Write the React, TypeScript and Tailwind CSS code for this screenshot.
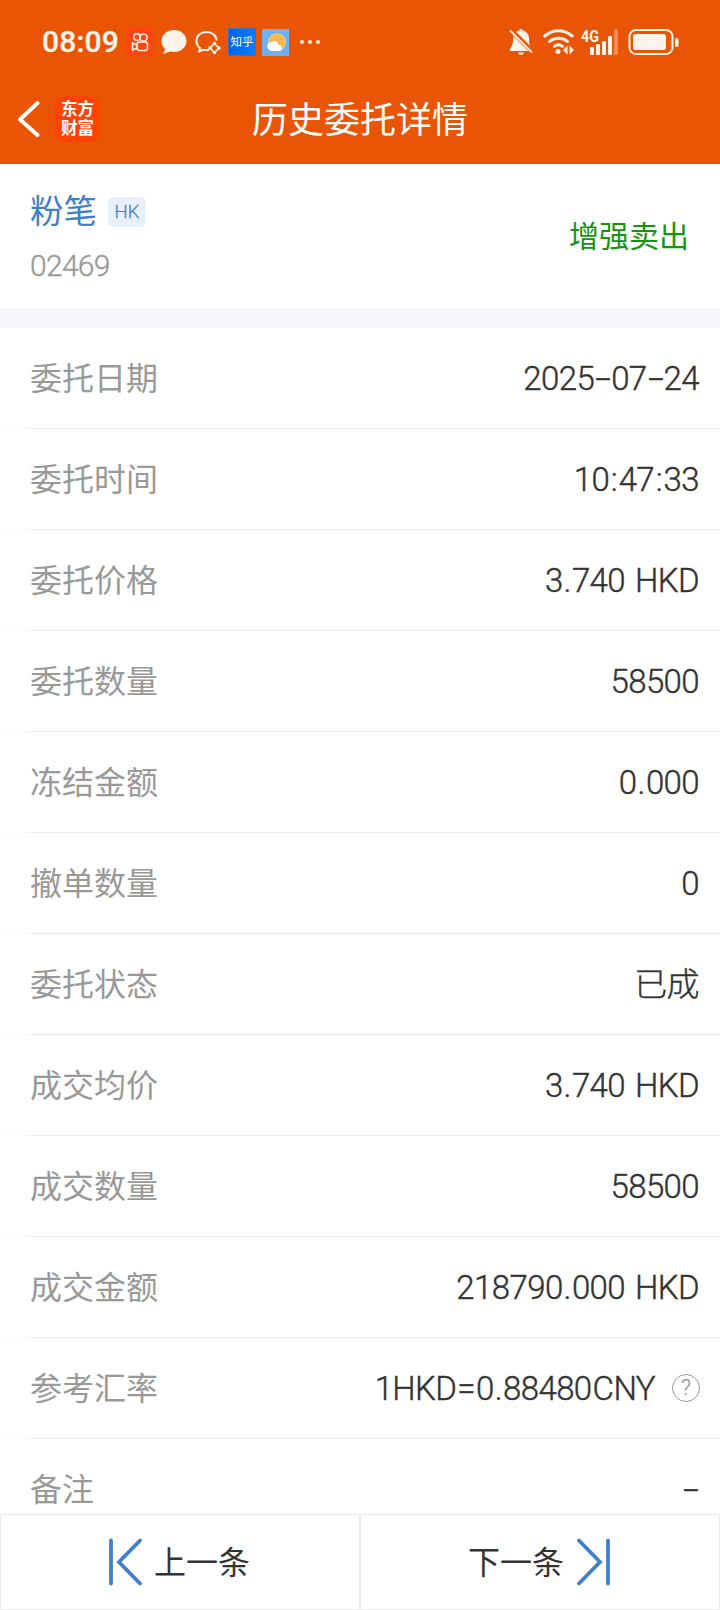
type Row = {
  label: string;
  value: string;
  help?: boolean;
};

const rows: Row[] = [
  { label: "委托日期", value: "2025-07-24" },
  { label: "委托时间", value: "10:47:33" },
  { label: "委托价格", value: "3.740 HKD" },
  { label: "委托数量", value: "58500" },
  { label: "冻结金额", value: "0.000" },
  { label: "撤单数量", value: "0" },
  { label: "委托状态", value: "已成" },
  { label: "成交均价", value: "3.740 HKD" },
  { label: "成交数量", value: "58500" },
  { label: "成交金额", value: "218790.000 HKD" },
  { label: "参考汇率", value: "1HKD=0.88480CNY", help: true },
  { label: "备注", value: "-" },
];

const StatusBar = () => (
  <div className="flex h-[84px] items-center justify-between pl-[42px] pr-[41px] text-[#fff3ea]">
    <div className="flex items-center">
      <span className="w-[80px] whitespace-nowrap font-[Roboto] text-[30px] font-medium leading-none tracking-[0.2px] [-webkit-text-stroke:0.3px]">
        08:09
      </span>
      <svg className="ml-[4px] h-7 w-7" viewBox="0 0 28 28" fill="none">
        <rect width="28" height="28" fill="#ff4510" />
        <g stroke="currentColor" strokeWidth="1.5">
          <circle cx="11" cy="9" r="3.3" />
          <circle cx="17.5" cy="9.5" r="3.6" />
          <rect x="11" y="14" width="10.5" height="8.5" rx="2.4" />
          <path d="M11 17 6.5 15v7l4.500-2" />
        </g>
      </svg>
      <svg className="ml-[6px] h-7 w-7" viewBox="0 0 28 28">
        <path
          d="M14 2C7 2 1.500 6.700 1.500 13c0 3.500 1.400 6.200 3.800 8.300L3 26l7.200-2.500c1.200.3 2.500.5 3.800.5 7 0 12.500-4.700 12.500-11S21 2 14 2Z"
          fill="currentColor"
        />
      </svg>
      <svg className="ml-[6px] h-7 w-7" viewBox="0 0 28 28" fill="none">
        <g stroke="currentColor" strokeWidth="2">
          <path d="M22.500 12.500C22.500 7.500 18 4 12.500 4 6.500 4 2.500 7.800 2.500 13c0 3 1.300 5.400 3.500 7l-.8 3.200 4.300-1.400c1.800.4 3.500.4 5.500 0" />
          <path d="m20.500 15.500 4.500 4.500-4.500 4.500L16 20Z" strokeWidth="1.600" />
        </g>
        <g fill="currentColor">
          <circle cx="20.500" cy="15.500" r="1.800" />
          <circle cx="25" cy="20" r="1.800" />
          <circle cx="20.500" cy="24.500" r="1.800" />
          <circle cx="16" cy="20" r="1.800" />
        </g>
      </svg>
      <span className="ml-[6px] flex h-7 w-7 items-center justify-center border border-[#3a72c8] bg-linear-to-r from-[#0a62e8] to-[#0a7cff] pt-px text-[11.5px] leading-none text-white">
        知乎
      </span>
      <svg className="ml-[6px] h-[27px] w-[27px]" viewBox="0 0 27 27">
        <rect width="27" height="27" fill="#6fb0f2" />
        <circle cx="15" cy="13" r="8.800" fill="#ffd491" />
        <circle cx="15" cy="13" r="8" fill="#f9b64c" />
        <path
          d="M10 22a4.500 4.500 0 0 1-.5-9 4.500 4.500 0 0 1 7 3 3 3 0 0 1 1 6Z"
          fill="#fff"
        />
      </svg>
      <span className="ml-[11px] flex gap-[4px]">
        <i className="h-1 w-1 rounded-full bg-current" />
        <i className="h-1 w-1 rounded-full bg-current" />
        <i className="h-1 w-1 rounded-full bg-current" />
      </span>
    </div>
    <div className="flex items-center">
      <svg className="h-7 w-6" viewBox="0 0 24 28" fill="none">
        <path
          d="M12 1c1 0 1.600.7 1.700 1.600C18 3.500 20 7 20 10.500c0 5 .5 7 3 10.500v2H1v-2c2.500-3.500 3-5.500 3-10.500C4 7 6 3.500 10.300 2.600 10.400 1.700 11 1 12 1ZM9 24.500h6c-.5 1.600-1.500 2.500-3 2.500s-2.500-.9-3-2.500Z"
          fill="currentColor"
        />
        <path d="M1 1.500 24 24" stroke="#e95504" strokeWidth="5" />
        <path d="M1 2.500 23 24.500" stroke="currentColor" strokeWidth="1.800" />
      </svg>
      <svg className="ml-[10px] h-7 w-8" viewBox="0 0 32 28" fill="none">
        <g stroke="currentColor" strokeWidth="3" strokeLinecap="round">
          <path d="M1.800 8c8-7 19.400-7 27.400 0" />
          <path d="M6.500 13.500c5-4.500 13-4.500 18 0" />
          <path d="M11.500 18.300c2.500-2 5.500-2 8 0" />
        </g>
        <g fill="currentColor">
          <circle cx="15" cy="23.500" r="2.500" />
          <path d="M24.500 17.500v9l-4.500-4.500ZM26.500 17.500v9l4.500-4.500Z" />
        </g>
      </svg>
      <svg className="ml-[6px] h-7 w-[40px] overflow-visible" viewBox="0 0 40 28">
        <text
          x="0"
          y="14"
          fill="currentColor"
          fontFamily="Roboto"
          fontSize="16"
          fontWeight="700"
          textLength="18"
          lengthAdjust="spacingAndGlyphs"
        >
          4G
        </text>
        <g fill="currentColor">
          <rect x="9" y="19" width="4" height="8" rx="1" />
          <rect x="15" y="16" width="4" height="11" rx="1" />
          <rect x="21" y="13" width="4" height="14" rx="1" />
          <rect x="27" y="8" width="4" height="19" rx="1" />
          <rect x="33" y="1" width="4" height="26" rx="1" opacity=".35" />
        </g>
      </svg>
      <svg className="ml-[7px] h-7 w-[51px]" viewBox="0 0 51 28">
        <rect
          x="1.500"
          y="2"
          width="43"
          height="24"
          rx="6.500"
          fill="none"
          stroke="currentColor"
          strokeWidth="2"
        />
        <rect x="5" y="6" width="33" height="16" rx="2.500" fill="currentColor" />
        <rect x="47" y="10" width="3.500" height="9" rx="1.500" fill="currentColor" />
      </svg>
    </div>
  </div>
);

const TitleBar = () => (
  <div className="grid h-[80px] grid-cols-3 items-start text-white">
    <div className="flex items-center pl-[17px] pt-3">
      <svg className="h-[38px] w-6" viewBox="0 0 24 38" fill="none">
        <path
          d="M20.500 3 3 19.500 20.500 35"
          stroke="currentColor"
          strokeWidth="4"
          strokeLinecap="round"
          strokeLinejoin="round"
        />
      </svg>
      <div className="ml-[14px] flex h-[46px] w-[45px] flex-col items-center justify-center rounded-[10px] bg-[#ff4300] text-[16.5px] font-bold leading-[19.5px]">
        <span>东方</span>
        <span>财富</span>
      </div>
    </div>
    <h1 className="pt-[11px] text-center text-[36px] leading-[52px]">
      历史委托详情
    </h1>
  </div>
);

const charStyle: { [char: string]: string } = {
  "-": "inline-block w-[17px] scale-x-[1.7] text-center",
  ":": "px-[1.6px]",
  ".": "px-[1px]",
  " ": "pr-[2.5px]",
  "=": "px-[1px]",
  C: "pl-[1px]",
};

const Value = ({ row }: { row: Row }) => (
  <span
    className={`whitespace-pre text-[33px] font-light leading-none tracking-[-0.6px] text-[#333] [-webkit-text-stroke:0.4px_#333] ${
      row.help ? "" : "mr-px"
    }`}
  >
    {row.value.split(/([-:. =C])/).map((part, i) => (
      <span key={i} className={charStyle[part]}>
        {part}
      </span>
    ))}
  </span>
);

const HelpIcon = () => (
  <span className="ml-[17px] flex h-7 w-7 items-center justify-center rounded-full border border-[#999] text-[22px] font-light leading-none text-[#888]">
    ?
  </span>
);

const DetailRow = ({ row }: { row: Row }) => (
  <div className="flex h-[101px] flex-none flex-col">
    <div className="flex flex-1 items-center justify-between pl-[30px] pr-5">
      <span className="pt-[2px] text-[32px] text-[#999]">{row.label}</span>
      <div className="flex items-center">
        <Value row={row} />
        {row.help && <HelpIcon />}
      </div>
    </div>
    <div className="h-px border-l-[30px] border-[#f9f9f9] bg-[#ebebeb]" />
  </div>
);

const SkipIcon = ({ className }: { className?: string }) => (
  <svg className={`h-12 w-9 ${className ?? ""}`} viewBox="0 0 36 48" fill="none">
    <path
      d="M3 2.500v43M32 2.500 11 24l21 21.500"
      stroke="#427fcb"
      strokeWidth="3.800"
      strokeLinecap="round"
    />
  </svg>
);

export default function App() {
  return (
    <div className="flex h-[1610px] w-[720px] flex-col overflow-hidden bg-white font-[Roboto,'Noto_Sans_CJK_SC',sans-serif]">
      <header className="h-[164px] flex-none bg-[#e95504]">
        <StatusBar />
        <TitleBar />
      </header>

      <section className="flex h-[144px] flex-none items-center justify-between pl-[30px] pr-[31px]">
        <div>
          <div className="flex items-center pt-[3px]">
            <span className="text-[33.5px] leading-[50px] text-[#427fcb]">
              粉笔
            </span>
            <span className="ml-[11px] flex h-[30px] w-[38px] items-center justify-center rounded-[5px] bg-[#e8f1fb] pt-[2px] text-[18.5px] font-light text-[#427fcb] [-webkit-text-stroke:0.3px]">
              HK
            </span>
          </div>
          <div className="mt-[7px] text-[30px] font-light leading-[44px] tracking-[-0.7px] text-[#999] [-webkit-text-stroke:0.4px]">
            02469
          </div>
        </div>
        <span className="text-[30px] text-[#129612]">增强卖出</span>
      </section>

      <div className="h-5 flex-none bg-[#f5f7fa]" />

      <main className="flex min-h-0 flex-1 flex-col overflow-hidden">
        {rows.map((row) => (
          <DetailRow key={row.label} row={row} />
        ))}
      </main>

      <footer className="grid h-[96px] flex-none grid-cols-2 bg-white text-[32px] text-[#333]">
        <button className="flex items-center border border-[#ebebeb] pl-[107px]">
          <SkipIcon />
          <span className="ml-[10px] pt-[2px]">上一条</span>
        </button>
        <button className="flex items-center justify-end border border-[#ebebeb] pr-[108px]">
          <span className="mr-[11px] pt-[2px]">下一条</span>
          <SkipIcon className="rotate-180" />
        </button>
      </footer>
    </div>
  );
}
